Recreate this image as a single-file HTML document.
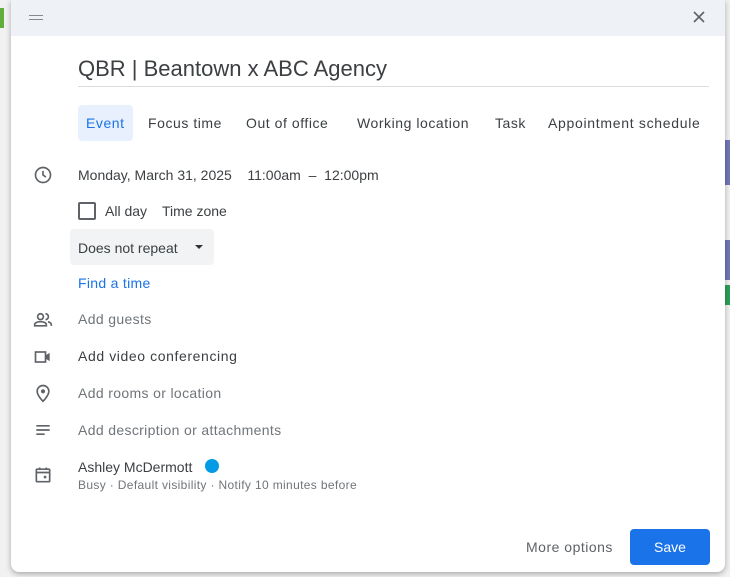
<!DOCTYPE html>
<html><head><style>
*{margin:0;padding:0;box-sizing:border-box}
body{width:730px;height:577px;background:#f1f1f1;position:relative;overflow:hidden;font-family:"Liberation Sans",Arial,sans-serif;color:#3c4043}
.dlg{position:absolute;left:11px;top:0;width:714px;height:572px;background:#fff;border-radius:0 0 8px 8px;box-shadow:0 2px 6px rgba(0,0,0,.3);overflow:hidden}
.hdr{height:36px;background:#eef1f6}
.a{position:absolute;white-space:nowrap}
.ic{position:absolute;left:22px}
.t14{font-size:14px}
.tab{letter-spacing:.55px}
.g{color:#70757a;letter-spacing:.35px}
</style></head><body>
<div class="a" style="left:0;top:8px;width:4px;height:20px;background:#5fae3c"></div>
<div class="a" style="left:725px;top:140px;width:5px;height:45px;background:#7076b8"></div>
<div class="a" style="left:725px;top:240px;width:5px;height:40px;background:#7076b8"></div>
<div class="a" style="left:725px;top:285px;width:5px;height:20px;background:#2e9e5b"></div>
<div class="dlg">
<div class="hdr"></div>
<div class="a" style="left:18px;top:15px;width:14px;height:1px;background:#888;box-shadow:0 4px 0 #888"></div>
<svg class="a" style="left:682px;top:11px" width="12" height="12" viewBox="0 0 12 12"><path d="M1 1l10 10M11 1L1 11" stroke="#5f6368" stroke-width="1.6"/></svg>
<div class="a" style="left:67px;top:56px;font-size:22px;color:#3c4043">QBR | Beantown x ABC Agency</div>
<div class="a" style="left:67px;top:86px;width:631px;height:1px;background:#dadce0"></div>
<div class="a" style="left:67px;top:105px;width:55px;height:36px;background:#e8f0fe;border-radius:4px"></div>
<div class="a t14 tab" style="left:75px;top:115px;color:#1a73e8">Event</div>
<div class="a t14 tab" style="left:137px;top:115px">Focus time</div>
<div class="a t14 tab" style="left:235px;top:115px">Out of office</div>
<div class="a t14 tab" style="left:346px;top:115px">Working location</div>
<div class="a t14 tab" style="left:484px;top:115px">Task</div>
<div class="a t14 tab" style="left:537px;top:115px;letter-spacing:.7px">Appointment schedule</div>
<svg class="ic" style="top:165px" width="20" height="20" viewBox="0 0 24 24"><circle cx="12" cy="12" r="9" fill="none" stroke="#5f6368" stroke-width="2"/><path d="M12 7v5l3.5 2.5" fill="none" stroke="#5f6368" stroke-width="2"/></svg>
<div class="a t14" style="left:67px;top:167px">Monday, March 31, 2025 &nbsp;&nbsp; 11:00am &nbsp;–&nbsp; 12:00pm</div>
<div class="a" style="left:67px;top:202px;width:18px;height:18px;border:2px solid #5f6368;border-radius:2px"></div>
<div class="a t14" style="left:94px;top:203px">All day</div>
<div class="a t14" style="left:151px;top:203px">Time zone</div>
<div class="a" style="left:59px;top:229px;width:144px;height:36px;background:#f1f3f4;border-radius:4px"></div>
<div class="a t14" style="left:67px;top:240px">Does not repeat</div>
<div class="a" style="left:184px;top:245px;border:4px solid transparent;border-top:4px solid #333"></div>
<div class="a t14" style="left:67px;top:275px;color:#1a73e8;letter-spacing:.3px">Find a time</div>
<svg class="ic" style="top:310px" width="20" height="20" viewBox="0 0 24 24"><circle cx="9" cy="8" r="3.5" fill="none" stroke="#5f6368" stroke-width="2"/><path d="M2 19v-1.5c0-2 3-3.5 7-3.5s7 1.5 7 3.5V19z" fill="none" stroke="#5f6368" stroke-width="2"/><path d="M15 4.5a3.5 3.5 0 010 7M18 14c2 .7 4 1.7 4 3.5V19" fill="none" stroke="#5f6368" stroke-width="2"/></svg>
<div class="a t14 g" style="left:67px;top:311px">Add guests</div>
<svg class="ic" style="top:347px" width="20" height="20" viewBox="0 0 24 24"><rect x="3" y="6" width="12" height="12" fill="none" stroke="#5f6368" stroke-width="2"/><path d="M15 10l5-3v10l-5-3z" fill="#5f6368"/></svg>
<div class="a t14" style="left:67px;top:348px;letter-spacing:.6px">Add video conferencing</div>
<svg class="ic" style="top:383px" width="20" height="20" viewBox="0 0 24 24"><path d="M12 22s-7-7-7-12a7 7 0 0114 0c0 5-7 12-7 12z" fill="none" stroke="#5f6368" stroke-width="2"/><circle cx="12" cy="10" r="2.5" fill="#5f6368"/></svg>
<div class="a t14 g" style="left:67px;top:385px">Add rooms or location</div>
<svg class="ic" style="top:420px" width="20" height="20" viewBox="0 0 24 24"><path d="M4 7h16M4 12h16M4 17h10" stroke="#5f6368" stroke-width="2"/></svg>
<div class="a t14 g" style="left:67px;top:422px">Add description or attachments</div>
<svg class="ic" style="top:465px" width="20" height="20" viewBox="0 0 24 24"><rect x="4" y="5" width="16" height="15" rx="1" fill="none" stroke="#5f6368" stroke-width="2"/><path d="M4 9h16M8 3v3M16 3v3" stroke="#5f6368" stroke-width="2"/><rect x="13" y="13" width="3" height="3" fill="#5f6368"/></svg>
<div class="a t14" style="left:67px;top:459px">Ashley McDermott</div>
<div class="a" style="left:194px;top:459px;width:14px;height:14px;border-radius:50%;background:#039be5"></div>
<div class="a" style="left:67px;top:478px;font-size:12px;color:#70757a;letter-spacing:.35px">Busy · Default visibility · Notify 10 minutes before</div>
<div class="a t14" style="left:515px;top:539px;color:#5f6368;letter-spacing:.5px">More options</div>
<div class="a" style="left:619px;top:529px;width:80px;height:36px;background:#1a73e8;border-radius:4px;color:#fff;font-size:14px;text-align:center;line-height:36px">Save</div>
</div>
</body></html>
